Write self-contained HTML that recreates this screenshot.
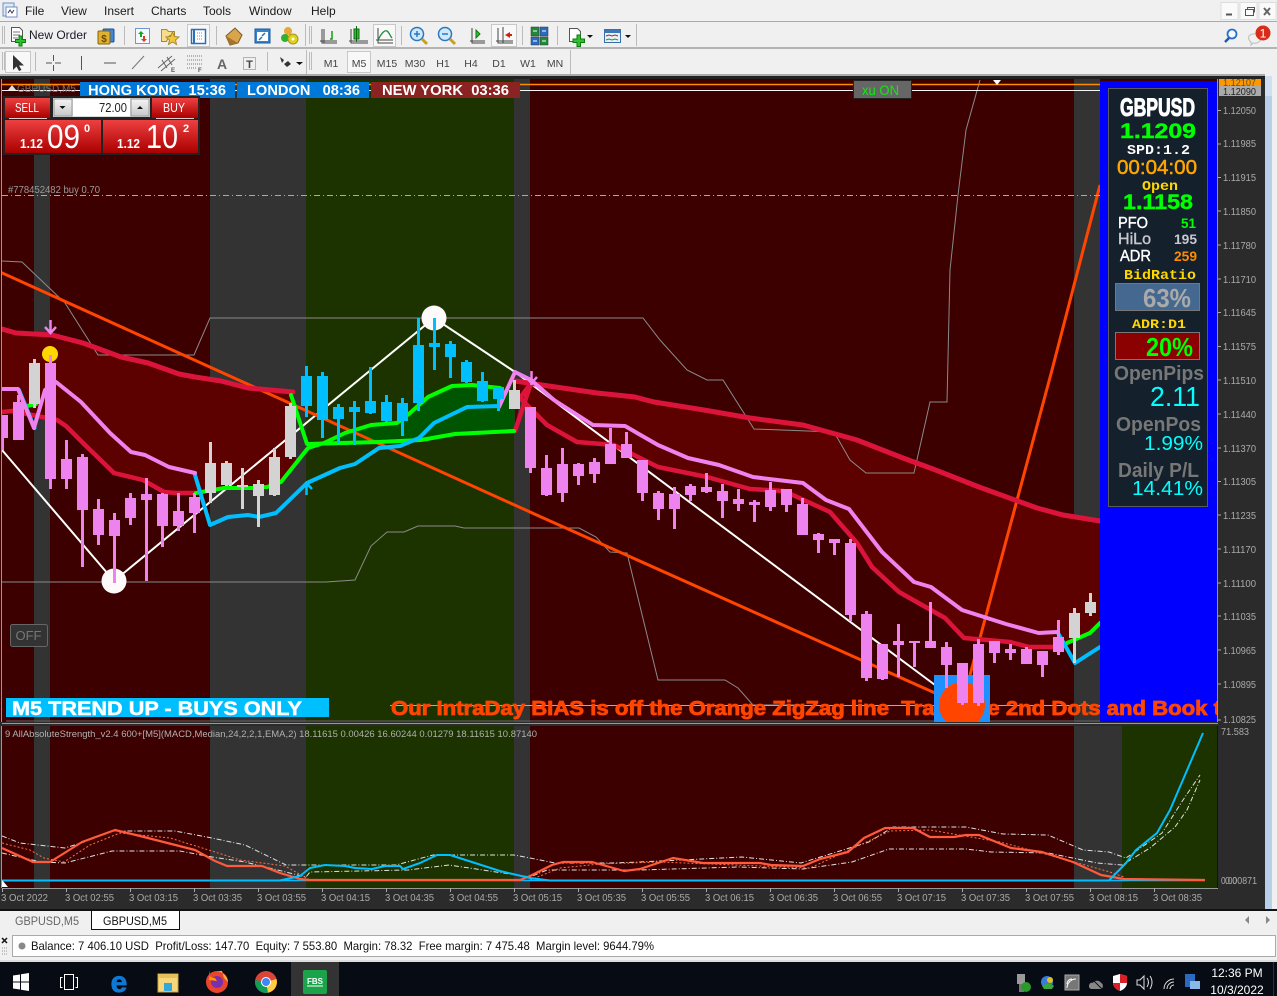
<!DOCTYPE html>
<html><head><meta charset="utf-8"><title>GBPUSD,M5</title>
<style>
html,body{margin:0;padding:0;background:#f0f0f0;width:1277px;height:996px;overflow:hidden}
svg{display:block;font-family:"Liberation Sans",sans-serif}
.m{font-size:12px;fill:#1a1a1a}
.tb{font-size:10.5px;fill:#444;text-anchor:middle}
.ax{font-size:10px;fill:#aaa}
.pm{font-family:"Liberation Mono",monospace;font-weight:bold}
.ps{font-weight:bold}
.ct{text-anchor:middle}
</style></head><body>
<svg width="1277" height="996" viewBox="0 0 1277 996" xmlns="http://www.w3.org/2000/svg">
<defs>
<clipPath id="main"><rect x="2" y="80" width="1215" height="642"/></clipPath>
<clipPath id="sub"><rect x="2" y="726" width="1216" height="162"/></clipPath>
<clipPath id="tk"><rect x="1100" y="690" width="117" height="32"/></clipPath>
<linearGradient id="rd" x1="0" y1="0" x2="0" y2="1"><stop offset="0" stop-color="#ee4040"/><stop offset="1" stop-color="#aa0000"/></linearGradient>
<linearGradient id="bt" x1="0" y1="0" x2="0" y2="1"><stop offset="0" stop-color="#f4f4f4"/><stop offset="1" stop-color="#c8c8c8"/></linearGradient>
</defs>

<!-- window chrome -->
<rect width="1277" height="996" fill="#f0f0f0"/>
<rect x="3" y="3" width="11" height="13" fill="#dfe8f5" stroke="#6f8fc0"/><rect x="6" y="7" width="11" height="10" fill="#fff" stroke="#6f8fc0"/><path d="M8 13l2-3 2 3 2-3" stroke="#336" fill="none"/>
<text class="m" x="25" y="15">File</text><text class="m" x="61" y="15">View</text><text class="m" x="104" y="15">Insert</text><text class="m" x="151" y="15">Charts</text><text class="m" x="203" y="15">Tools</text><text class="m" x="249" y="15">Window</text><text class="m" x="311" y="15">Help</text>
<g fill="#fafafa" stroke="#ddd"><rect x="1221" y="2.5" width="17" height="17"/><rect x="1240" y="2.5" width="17" height="17"/><rect x="1259" y="2.5" width="17" height="17"/></g>
<path d="M1226 14.5h6" stroke="#555" stroke-width="2"/>
<path d="M1245.5 9.5h8v6h-8zM1247.5 9.5v-2h7v5" fill="none" stroke="#555"/>
<path d="M1264 8l6 7M1270 8l-6 7" stroke="#666" stroke-width="2"/>
<rect y="21" width="1277" height="1" fill="#aaa"/>
<rect y="47" width="1277" height="2" fill="#b4b4b4"/>
<rect y="74" width="1265" height="2" fill="#aaa"/>
<g fill="#bbb"><rect x="2" y="26" width="1" height="18"/><rect x="4" y="26" width="1" height="18"/><rect x="2" y="52" width="1" height="18"/><rect x="4" y="52" width="1" height="18"/><rect x="309" y="26" width="1" height="18"/><rect x="311" y="26" width="1" height="18"/><rect x="309" y="52" width="1" height="18"/><rect x="311" y="52" width="1" height="18"/></g>
<g fill="#bbb"><rect x="305" y="24" width="1" height="22"/><rect x="124" y="26" width="1" height="19"/><rect x="216" y="26" width="1" height="19"/><rect x="401" y="26" width="1" height="19"/><rect x="522" y="26" width="1" height="19"/><rect x="557" y="26" width="1" height="19"/><rect x="636" y="24" width="1" height="22"/><rect x="35" y="52" width="1" height="19"/><rect x="267" y="52" width="1" height="19"/><rect x="306" y="50" width="1" height="24"/><rect x="570" y="50" width="1" height="24"/></g>

<!-- toolbar 1 -->
<path d="M11.5 27.5h8l3 3v11h-11z" fill="#fff" stroke="#555"/><path d="M13 32h7M13 35h7M13 38h5" stroke="#777"/><path d="M19 34h3v3.500h3.500v3H22v3.500h-3v-3.500h-3.500v-3H19z" fill="#2fc12f" stroke="#0c7a0c" transform="translate(0,2)"/>
<text x="29" y="39" font-size="12" fill="#1a1a2a">New Order</text>
<rect x="103" y="29" width="11" height="13" fill="#3d86d8" stroke="#1c4f90" rx="1"/><rect x="98" y="31" width="12" height="13" fill="#e0b030" stroke="#86640c" rx="1"/><text x="104" y="42" font-size="10" font-weight="bold" class="ct" fill="#6a4a00">$</text>
<rect x="135.500" y="28.500" width="14" height="15" fill="#f4f8ff" stroke="#6a9ad2"/><path d="M141 31l3 3h-2v3h-2v-3h-2z" fill="#1ba51b"/><path d="M144 42l-3-3h2v-3h2v3h2z" fill="#e03a1a"/>
<path d="M161.500 29.500h5l2 2h6v4h-5l-3 6h-5z" fill="#f7dc8a" stroke="#a88a30"/><path d="M172.500 32l2 4.500 4.500.5-3.500 3 1 4.500-4-2.500-4 2.500 1-4.500-3.500-3 4.500-.5z" fill="#f0c83c" stroke="#a88a30"/>
<rect x="187.500" y="24.500" width="22" height="22" fill="#f8f8f8" stroke="#c8c8c8"/><rect x="191.500" y="29.500" width="14" height="14" fill="#fff" stroke="#2a70b8" stroke-width="1.500"/><path d="M194 29v14" stroke="#2a70b8" stroke-width="2"/><path d="M197 33h6M197 36h6M197 39h6" stroke="#88a" stroke-dasharray="1 1"/>
<path d="M226 36l9-8 7 7-4 8-8 2z" fill="#d8a54c" stroke="#7c5a1c"/><path d="M226 36l4 9 8-2" fill="#a87428"/>
<rect x="255" y="29" width="15" height="14" fill="#3782c9" stroke="#1d5a98"/><rect x="257" y="32" width="11" height="9" fill="#fff"/><path d="M259 40l3-3M265 33l-3 3" stroke="#2a70b8" stroke-width="1.500"/>
<circle cx="288" cy="31" r="4" fill="#e8a838"/><circle cx="285" cy="38" r="4" fill="#30b030"/><circle cx="293" cy="39" r="5" fill="#e0d020" stroke="#a89810"/><circle cx="293" cy="39" r="1.500" fill="#fff"/>
<g fill="none" stroke="#444"><path d="M322 29v14h15M324 29v14M320 41h17"/></g><path d="M332 31v8h-2" stroke="#1b9a1b" fill="none" stroke-width="1.500"/>
<g fill="none" stroke="#444"><path d="M351 29v14h17M349 41h19"/></g><rect x="354" y="29" width="5" height="10" fill="#2fbf2f" stroke="#0c6a0c"/><path d="M356.500 26v16" stroke="#0c6a0c"/>
<rect x="373.500" y="24.500" width="22" height="22" fill="#f8f8f8" stroke="#c8c8c8"/><g fill="none" stroke="#444"><path d="M378 28v15h15M376 40h17"/></g><path d="M378 40c4-8 7-10 9-9 2 1 3 5 5 7" fill="none" stroke="#1b8a3a" stroke-width="1.300"/>
<circle cx="417" cy="34" r="6.500" fill="#cfe8fa" stroke="#2a78c0" stroke-width="1.500"/><path d="M414 34h6M417 31v6" stroke="#2a78c0" stroke-width="1.500"/><path d="M422 39l5 5" stroke="#c8a020" stroke-width="3"/>
<circle cx="445" cy="34" r="6.500" fill="#cfe8fa" stroke="#2a78c0" stroke-width="1.500"/><path d="M442 34h6" stroke="#2a78c0" stroke-width="1.500"/><path d="M450 39l5 5" stroke="#c8a020" stroke-width="3"/>
<g fill="none" stroke="#444"><path d="M472 28v15h13M470 41h15"/></g><path d="M476 30l4 4-4 4z" fill="#2fbf2f" stroke="#0c7a0c"/>
<rect x="491.500" y="24.500" width="25" height="22" fill="#f8f8f8" stroke="#c8c8c8"/><g fill="none" stroke="#444"><path d="M498 28v15h15M496 41h17M503 27v16"/></g><path d="M505 35l5-3v2h2v2h-2v2z" fill="#d02010"/>
<g stroke="#333" stroke-width=".5"><rect x="531" y="27" width="8" height="9" fill="#1e8a3a"/><rect x="540" y="27" width="8" height="9" fill="#2a6ac0"/><rect x="531" y="37" width="8" height="8" fill="#2a6ac0"/><rect x="540" y="37" width="8" height="8" fill="#1e8a3a"/></g><path d="M533 31h4M542 31h4M533 41h4M542 41h4" stroke="#fff"/>
<path d="M569.500 28.500h8l3 3v10h-11z" fill="#fff" stroke="#555"/><path d="M577 35h3.500v4h4v3.500h-4v4H577v-4h-4V39h4z" fill="#2fc12f" stroke="#0c7a0c"/><path d="M587 35h6l-3 3z" fill="#111"/>
<rect x="604.500" y="29.500" width="16" height="13" fill="#e8f0fa" stroke="#3a6ea8"/><rect x="605" y="30" width="15" height="3" fill="#3a78b8"/><path d="M606 36l3-1 3 1 3-1 3 1" stroke="#c02010" fill="none"/><path d="M606 40l3-1 3 1 3-1 3 1" stroke="#1b9a1b" fill="none"/><path d="M625 35h6l-3 3z" fill="#111"/>
<circle cx="1232" cy="34" r="4.500" fill="#f4f8ff" stroke="#2a70c8" stroke-width="1.800"/><path d="M1229 38l-4 4" stroke="#1d5aa8" stroke-width="2.500"/>
<path d="M1249 36c2-3 11-3 12 1s-4 7-8 6l-2 2 0-3c-2-1-3-4-2-6z" fill="#f0f0f0" stroke="#bbb"/><circle cx="1263" cy="33" r="7.500" fill="#d92a1a"/><text x="1263" y="37.500" font-size="12" class="ct" fill="#fff">1</text>

<!-- toolbar 2 -->
<rect x="5.500" y="51.500" width="25" height="21" fill="#f8f8f8" stroke="#c8c8c8"/><path d="M13 55v15l3.500-3.500 2.500 4.500 2.500-1-2.500-4.500h5z" fill="#333"/>
<path d="M46 63h6M55 63h6M53.500 55v6M53.500 65v6" stroke="#555"/>
<path d="M81.500 56v14" stroke="#555"/><path d="M104 63h12" stroke="#555"/><path d="M132 69l12-13" stroke="#777"/>
<path d="M158 68l14-12M161 71l14-12M162 60l5 8M167 57l5 8" stroke="#666" fill="none"/><text x="171" y="72" font-size="6" font-weight="bold" fill="#555">E</text>
<path d="M187 56h16M187 60h16M187 64h16M187 68h10" stroke="#777" stroke-dasharray="1 1"/><text x="198" y="72" font-size="6" font-weight="bold" fill="#555">F</text>
<text x="222" y="69" font-size="14" font-weight="bold" class="ct" fill="#666">A</text>
<rect x="243.500" y="57.500" width="12" height="12" fill="none" stroke="#777" stroke-dasharray="1 1"/><text x="249.500" y="68" font-size="11" font-weight="bold" class="ct" fill="#444">T</text>
<path d="M280 57l4 3-2 3zM284 64l3 3 4-3-3-3z" fill="#333"/><path d="M296 62h7l-3.500 3z" fill="#111"/>
<rect x="347.500" y="51.500" width="23" height="21" fill="#f8f8f8" stroke="#c8c8c8"/>
<text class="tb" x="331" y="67">M1</text><text class="tb" x="359" y="67">M5</text><text class="tb" x="387" y="67">M15</text><text class="tb" x="415" y="67">M30</text><text class="tb" x="443" y="67">H1</text><text class="tb" x="471" y="67">H4</text><text class="tb" x="499" y="67">D1</text><text class="tb" x="528" y="67">W1</text><text class="tb" x="555" y="67">MN</text>

<!-- chart frame -->
<rect x="0" y="76" width="1265" height="835" fill="#2b2b2b"/>
<rect x="0" y="76" width="1265" height="3" fill="#222"/>
<rect x="1265" y="76" width="7" height="835" fill="#b8d0ea"/>
<rect x="1265" y="76" width="7" height="20" fill="#d0e0f2"/>
<rect x="0" y="79" width="1218" height="644" fill="#3c0000"/>
<g fill="#333">
<rect x="34" y="79" width="16" height="644"/><rect x="210" y="79" width="96" height="644"/><rect x="514" y="79" width="16" height="644"/><rect x="1074" y="79" width="26" height="644"/>
</g>
<rect x="306" y="79" width="208" height="644" fill="#1c3300"/>

<g clip-path="url(#main)">
<path d="M2 329L16 333 52 335 83 343 121 357 148 363 179 374 195 377 221 381 248 388 293 392 296 463 281 482 267 487 253 488 224 488 196 493 176 493 164 492 143 480 114 473 83 443 66 426 57 420 12 411 2 412Z" fill="#5c0000"/>
<path d="M515 381L535 384 597 393 635 397 654 402 704 410 750 418 803 425 857 440 903 458 933 469 979 487 1037 508 1063 515 1100 521 1100 623 1090 633 1067 643 1056 647 1029 647 1010 642 964 638 945 618 899 592 872 567 857 543 830 512 784 491 750 489 707 477 658 467 614 445 577 442 547 425 520 398 515 431Z" fill="#5c0000"/>
<path d="M307 444L324 443 345 433 371 425 397 423 410 413 428 397 452 386 472 385 500 388 515 392 514 431 455 434 421 440 379 442Z" fill="#005500"/>
<!-- thin channels -->
<g fill="none" stroke="#8a8a8a" stroke-width="1">
<path d="M2 261L22 262 65 303 98 355 194 355 210 318 643 318 660 340 687 370 707 380 723 380 754 429 834 432 850 460 866 473 914 473 930 402 947 402 950 270 958 195 966 130 980 80"/>
<path d="M2 582L326 582 355 580 371 546 387 532 404 532 418 526 455 526 464 528 579 528 596 537 610 552 627 553 658 680 725 680 738 688 753 705 800 705"/>
</g>
<!-- zigzag -->
<path d="M2 450L114 581 434 318 515 372 935 685" fill="none" stroke="#fff" stroke-width="2"/>
<path d="M0 272L540 516.500 935 693" fill="none" stroke="#ff4500" stroke-width="3"/>
<path d="M970 675L1052 370 1100 185" fill="none" stroke="#ff4500" stroke-width="3"/>
<!-- top & level lines -->
<path d="M2 84.500H1100" stroke="#ff8c00" stroke-width="1.500"/>
<path d="M2 90.500H1100" stroke="#f5f5f5" stroke-width="1"/>
<path d="M2 195.500H1100" stroke="#aaa" stroke-dasharray="6 3 1 3"/>
<path d="M390 705.500H1100" stroke="#f0a040"/>
<path d="M6 721H1100" stroke="#666"/>
<!-- MA lines -->
<g fill="none" stroke-linejoin="round" stroke-linecap="round">
<path d="M2 329L16 333 52 335 83 343 121 357 148 363 179 374 195 377 221 381 248 388 293 392" stroke="#dc143c" stroke-width="5"/>
<path d="M515 381L535 384 597 393 635 397 654 402 704 410 750 418 803 425 857 440 903 458 933 469 979 487 1037 508 1063 515 1100 521" stroke="#dc143c" stroke-width="5"/>
<path d="M2 412L12 411 57 420 66 426 83 443 114 473 143 480 164 492 176 493 195 493" stroke="#dc143c" stroke-width="4.500"/>
<path d="M515 431L531 383 520 398 547 425 577 442 614 445 658 467 707 477 750 489 784 491 830 512 857 543 872 567 899 592 945 618 964 638 1010 642 1029 647 1056 647" stroke="#dc143c" stroke-width="4.500"/>
<path d="M196 493L224 488 253 488 267 487 281 482 308 448 324 443 345 433 371 425 397 423 410 413 428 397 452 386 472 385 500 388" stroke="#00ff00" stroke-width="4"/>
<path d="M291 395L307 444 379 442 421 440 455 434 514 431" stroke="#00ff00" stroke-width="4"/>
<path d="M27 406L36 404" stroke="#00ff00" stroke-width="4"/>
<path d="M1058 648L1067 643 1090 633 1100 623" stroke="#00ff00" stroke-width="4"/>
<path d="M19 390L34.500 428" stroke="#00bfff" stroke-width="4"/>
<path d="M195 475L210 525 228 517 248 515 259 517 276 513 307 483 340 468 355 464 379 448 400 446 419 438 434 423 467 407 499 406" stroke="#00bfff" stroke-width="4"/>
<path d="M1058 633L1075 663 1100 647" stroke="#00bfff" stroke-width="4"/>
<path d="M2 389L18 389 34 428 45 390 56 382 81 402 110 433 131 452 145 455 169 467 195 473" stroke="#ee82ee" stroke-width="4"/>
<path d="M499 407L515 372 531 380 554 400 593 425 625 426 658 445 688 458 719 465 753 477 803 483 826 500 849 509 882 552 914 582 931 587 962 610 1006 624 1038.600 633 1057 632" stroke="#ee82ee" stroke-width="4"/>
</g>
<!-- markers under candles -->
<circle cx="50" cy="354" r="8" fill="#ffd700"/>
<text x="391" y="715" font-size="20.500" font-weight="bold" fill="#ff4500" stroke="#ff4500" stroke-width=".8" textLength="830" lengthAdjust="spacingAndGlyphs" xml:space="preserve" style="white-space:pre">Our IntraDay BIAS is off the Orange ZigZag line  Trade the 2nd Dots and Book t</text>
<rect x="934" y="675" width="56" height="47" fill="#1e90ff"/>
<circle cx="962" cy="705" r="23" fill="#ff4500"/>
<circle cx="114" cy="581" r="12.500" fill="#fffafa"/>
<circle cx="434" cy="318" r="12.500" fill="#fffafa"/>
<!-- candles -->
<g fill="none" shape-rendering="crispEdges">
<path stroke="#ee82ee" stroke-width="3" d="M2.500 415V450M18.500 395V440M50.500 355V489M66.500 440V489M82.500 454V567M98.500 499V545M114.500 513V583M130.500 493V525M146.500 478V581M162.500 493V547M178.500 493V531M194.500 493V533M530.500 407V473M546.500 455V496M562.500 448V502M578.500 463V485M594.500 458V483M610.500 428V464M626.500 432V458M642.500 460V501M658.500 491V520M674.500 487V529M690.500 484V501M706.500 473V493M722.500 484V518M738.500 489V511M754.500 500V522M770.500 482V511M786.500 489V512M802.500 498V535M818.500 533V553M834.500 539V555M850.500 539V621M866.500 611V681M882.500 644V680M898.500 624V677M914.500 641V667M930.500 602V648M946.500 642V688M962.500 663V705M978.500 639V706M994.500 641V663M1010.500 644V660M1026.500 647V664M1042.500 651V677M1058.500 620V655"/>
<path stroke="#ee82ee" stroke-width="11" d="M2.500 415V438M18.500 402V440M50.500 363V479M66.500 459V479M82.500 457V510M98.500 509V535M114.500 520V536M130.500 498V518M146.500 494V500M162.500 494V526M178.500 511V526M194.500 497V513M530.500 407V468M546.500 468V495M562.500 464V493M578.500 464V476M594.500 462V474M610.500 444V464M626.500 444V458M642.500 460V493M658.500 493V509M674.500 494V509M690.500 486V495M706.500 487V492M722.500 491V501M738.500 499V504M754.500 502V505M770.500 490V507M786.500 489V505M802.500 504V535M818.500 534V540M834.500 539V543M850.500 543V615M866.500 614V678M882.500 644V679M898.500 641V645M914.500 641V643M930.500 641V648M946.500 647V665M962.500 663V703M978.500 644V703M994.500 641V653M1010.500 649V653M1026.500 649V664M1042.500 651V665M1058.500 637V652"/>
<path stroke="#d3d3d3" stroke-width="3" d="M34.500 359V408M210.500 442V503M226.500 461V486M242.500 468V509M258.500 480V527M274.500 448V496M290.500 403V459M514.500 380V409M1074.500 608V663M1090.500 593V616"/>
<path stroke="#d3d3d3" stroke-width="11" d="M34.500 363V404M210.500 463V493M226.500 463V485M242.500 485V487M258.500 484V496M274.500 457V495M290.500 406V457M514.500 390V409M1074.500 613V638M1090.500 602V613"/>
<path stroke="#00bfff" stroke-width="3" d="M306.500 366V417M322.500 372V438M338.500 404V443M354.500 401V445M370.500 367V414M386.500 395V422M402.500 398V436M418.500 318V411M434.500 318V370M450.500 341V378M466.500 360V383M482.500 372V402M498.500 387V411"/>
<path stroke="#00bfff" stroke-width="11" d="M306.500 376V406M322.500 376V420M338.500 407V419M354.500 407V412M370.500 401V413M386.500 402V421M402.500 403V421M418.500 345V403M434.500 343V347M450.500 344V357M466.500 362V382M482.500 381V401M498.500 387V399"/>
</g>
<!-- arrows -->
<g fill="none" stroke="#ee82ee" stroke-width="2.500"><path d="M50.500 320V333M45 327l5.500 6 5.500-6"/><path d="M531.500 371V385M526 377l5.500 6 5.500-6"/></g>
<g fill="none" stroke="#00bfff" stroke-width="2.500"><path d="M306.500 495V482M301 489l5.500-6 5.500 6"/></g>
<!-- blue panel -->
<rect x="1100" y="81" width="117" height="641" fill="#0000ff"/>
<rect x="1108.500" y="88.500" width="99" height="418" fill="#14202b" stroke="#5a5a5a"/>
<text x="1120" y="116" font-size="25" font-weight="bold" fill="#fff" stroke="#fff" stroke-width="1" textLength="75" lengthAdjust="spacingAndGlyphs">GBPUSD</text>
<text class="ps" x="1120" y="138" font-size="21" fill="#0f0" stroke="#0f0" stroke-width=".4" textLength="76" lengthAdjust="spacingAndGlyphs">1.1209</text>
<text class="pm" x="1127" y="154" font-size="14" fill="#fff" textLength="63" lengthAdjust="spacingAndGlyphs">SPD:1.2</text>
<text x="1117" y="174" font-size="20" fill="#ffa500" stroke="#ffa500" stroke-width=".5" textLength="80" lengthAdjust="spacingAndGlyphs">00:04:00</text>
<text class="pm" x="1142" y="190" font-size="14" fill="#ffd700" textLength="36" lengthAdjust="spacingAndGlyphs">Open</text>
<text class="ps" x="1123" y="209" font-size="21" fill="#0f0" stroke="#0f0" stroke-width=".4" textLength="70" lengthAdjust="spacingAndGlyphs">1.1158</text>
<text x="1118" y="228" font-size="16" fill="#fff" stroke="#fff" stroke-width=".4" textLength="30" lengthAdjust="spacingAndGlyphs">PFO</text>
<text class="ps" x="1181" y="228" font-size="14" fill="#0f0" textLength="15" lengthAdjust="spacingAndGlyphs">51</text>
<text x="1118" y="244" font-size="16" fill="#c8c8d0" stroke="#c8c8d0" stroke-width=".4" textLength="33" lengthAdjust="spacingAndGlyphs">HiLo</text>
<text class="ps" x="1174" y="244" font-size="14" fill="#c8c8d0" textLength="23" lengthAdjust="spacingAndGlyphs">195</text>
<text x="1120" y="261" font-size="16" fill="#fff" stroke="#fff" stroke-width=".4" textLength="31" lengthAdjust="spacingAndGlyphs">ADR</text>
<text class="ps" x="1174" y="261" font-size="14" fill="#ff8c00" textLength="23" lengthAdjust="spacingAndGlyphs">259</text>
<text class="pm" x="1124" y="279" font-size="14" fill="#ffd700" textLength="72" lengthAdjust="spacingAndGlyphs">BidRatio</text>
<rect x="1115.500" y="283.500" width="84" height="27" fill="#44688f" stroke="#777"/>
<text class="ps" x="1143" y="307" font-size="26" fill="#aaa" textLength="48" lengthAdjust="spacingAndGlyphs">63%</text>
<text class="pm" x="1132" y="328" font-size="13" fill="#ffd700" textLength="54" lengthAdjust="spacingAndGlyphs">ADR:D1</text>
<rect x="1115.500" y="332.500" width="84" height="27" fill="#8b0000" stroke="#777"/>
<text class="ps" x="1146" y="356" font-size="26" fill="#0f0" textLength="47" lengthAdjust="spacingAndGlyphs">20%</text>
<text class="ps" x="1114" y="380" font-size="20" fill="#777" textLength="90" lengthAdjust="spacingAndGlyphs">OpenPips</text>
<text x="1150" y="406" font-size="28" fill="#0ff" textLength="50" lengthAdjust="spacingAndGlyphs">2.11</text>
<text class="ps" x="1116" y="431" font-size="20" fill="#777" textLength="85" lengthAdjust="spacingAndGlyphs">OpenPos</text>
<text x="1144" y="450" font-size="20" fill="#0ff" textLength="59" lengthAdjust="spacingAndGlyphs">1.99%</text>
<text class="ps" x="1118" y="477" font-size="20" fill="#777" textLength="81" lengthAdjust="spacingAndGlyphs">Daily P/L</text>
<text x="1132" y="495" font-size="20" fill="#0ff" textLength="71" lengthAdjust="spacingAndGlyphs">14.41%</text>
<!-- ticker end over the panel -->
<g clip-path="url(#tk)"><text x="391" y="715" font-size="20.500" font-weight="bold" fill="#ff4500" stroke="#ff4500" stroke-width=".8" textLength="830" lengthAdjust="spacingAndGlyphs" xml:space="preserve" style="white-space:pre">Our IntraDay BIAS is off the Orange ZigZag line  Trade the 2nd Dots and Book t</text></g>
<rect x="6" y="698" width="323" height="19" fill="#00bfff"/>
<text x="12" y="715" font-size="19" font-weight="bold" fill="#fff" stroke="#fff" stroke-width=".4" textLength="290" lengthAdjust="spacingAndGlyphs">M5 TREND UP - BUYS ONLY</text>
</g>

<!-- chart overlay items -->
<path d="M8 90l4-5 4 5z" fill="#ddd"/>
<text x="17" y="92" font-size="10" fill="#777">GBPUSD,M5</text>
<rect x="80" y="82" width="155" height="16" fill="#0078d7"/><rect x="237" y="82" width="132" height="16" fill="#0078d7"/><rect x="371" y="82" width="149" height="16" fill="#8b2323"/>
<g font-weight="bold" fill="#fff" font-size="14.500">
<text x="88" y="95" textLength="138" lengthAdjust="spacingAndGlyphs" xml:space="preserve" style="white-space:pre">HONG KONG  15:36</text>
<text x="247" y="95" textLength="113" lengthAdjust="spacingAndGlyphs" xml:space="preserve" style="white-space:pre">LONDON   08:36</text>
<text x="382" y="95" textLength="127" lengthAdjust="spacingAndGlyphs" xml:space="preserve" style="white-space:pre">NEW YORK  03:36</text>
</g>
<path d="M993 80h8l-4 5z" fill="#fff"/>
<rect x="853.500" y="80.500" width="58" height="18" fill="#666" stroke="#222"/>
<text x="862" y="95" font-size="13.500" fill="#12e812" textLength="37" lengthAdjust="spacingAndGlyphs">xu ON</text>
<!-- one-click -->
<rect x="3" y="96" width="197" height="59" fill="#222"/>
<rect x="5" y="98" width="45" height="20" fill="url(#rd)"/><rect x="152" y="98" width="46" height="20" fill="url(#rd)"/>
<path d="M9 118.500h38M156 118.500h38" stroke="#fff" opacity=".8"/>
<text x="15" y="112" font-size="12.500" fill="#fff" textLength="24" lengthAdjust="spacingAndGlyphs">SELL</text><text x="163" y="112" font-size="12.500" fill="#fff" textLength="22" lengthAdjust="spacingAndGlyphs">BUY</text>
<rect x="53" y="98" width="97" height="19" fill="#ddd"/><rect x="54" y="99" width="18" height="17" fill="url(#bt)" stroke="#999"/><rect x="131" y="99" width="18" height="17" fill="url(#bt)" stroke="#999"/><rect x="73" y="99" width="57" height="17" fill="#fff"/>
<path d="M59.500 106h6l-3 3zM137 109h6l-3-3z" fill="#111"/>
<text x="99" y="112" font-size="12.500" fill="#222" textLength="28" lengthAdjust="spacingAndGlyphs">72.00</text>
<rect x="5" y="120" width="96" height="33" fill="url(#rd)"/><rect x="103" y="120" width="95" height="33" fill="url(#rd)"/>
<g fill="#fff">
<text x="20" y="148" font-size="13" font-weight="bold" textLength="23" lengthAdjust="spacingAndGlyphs">1.12</text><text x="47" y="148" font-size="33" textLength="33" lengthAdjust="spacingAndGlyphs">09</text><text x="84" y="132" font-size="11" font-weight="bold">0</text>
<text x="117" y="148" font-size="13" font-weight="bold" textLength="23" lengthAdjust="spacingAndGlyphs">1.12</text><text x="146" y="148" font-size="33" textLength="32" lengthAdjust="spacingAndGlyphs">10</text><text x="183" y="132" font-size="11" font-weight="bold">2</text>
</g>
<text x="8" y="193" font-size="10" fill="#999" textLength="92" lengthAdjust="spacingAndGlyphs">#778452482 buy 0.70</text>
<rect x="10.500" y="624.500" width="37" height="22" rx="2" fill="#333" stroke="#666"/><text x="28.500" y="640" font-size="13" class="ct" fill="#777">OFF</text>

<!-- price axis -->
<g class="ax">
<path d="M1218 110.500h3M1218 144h3M1218 177.500h3M1218 211h3M1218 245h3M1218 279h3M1218 312.500h3M1218 346.500h3M1218 380h3M1218 414h3M1218 448h3M1218 481.500h3M1218 515h3M1218 549h3M1218 583h3M1218 616h3M1218 650h3M1218 684h3M1218 720h3" stroke="#aaa"/>
<g font-size="10" fill="#aaa">
<text x="1223" y="114" textLength="33" lengthAdjust="spacingAndGlyphs">1.12050</text><text x="1223" y="147" textLength="33" lengthAdjust="spacingAndGlyphs">1.11985</text><text x="1223" y="181" textLength="33" lengthAdjust="spacingAndGlyphs">1.11915</text><text x="1223" y="215" textLength="33" lengthAdjust="spacingAndGlyphs">1.11850</text><text x="1223" y="249" textLength="33" lengthAdjust="spacingAndGlyphs">1.11780</text><text x="1223" y="283" textLength="33" lengthAdjust="spacingAndGlyphs">1.11710</text><text x="1223" y="316" textLength="33" lengthAdjust="spacingAndGlyphs">1.11645</text><text x="1223" y="350" textLength="33" lengthAdjust="spacingAndGlyphs">1.11575</text><text x="1223" y="384" textLength="33" lengthAdjust="spacingAndGlyphs">1.11510</text><text x="1223" y="418" textLength="33" lengthAdjust="spacingAndGlyphs">1.11440</text><text x="1223" y="452" textLength="33" lengthAdjust="spacingAndGlyphs">1.11370</text><text x="1223" y="485" textLength="33" lengthAdjust="spacingAndGlyphs">1.11305</text><text x="1223" y="519" textLength="33" lengthAdjust="spacingAndGlyphs">1.11235</text><text x="1223" y="553" textLength="33" lengthAdjust="spacingAndGlyphs">1.11170</text><text x="1223" y="587" textLength="33" lengthAdjust="spacingAndGlyphs">1.11100</text><text x="1223" y="620" textLength="33" lengthAdjust="spacingAndGlyphs">1.11035</text><text x="1223" y="654" textLength="33" lengthAdjust="spacingAndGlyphs">1.10965</text><text x="1223" y="688" textLength="33" lengthAdjust="spacingAndGlyphs">1.10895</text><text x="1223" y="723" textLength="33" lengthAdjust="spacingAndGlyphs">1.10825</text>
</g></g>
<rect x="1219" y="79" width="42" height="8" fill="#ff9800"/>
<text x="1223" y="86" font-size="10" fill="#552" textLength="33" lengthAdjust="spacingAndGlyphs">1.12107</text>
<rect x="1219" y="86" width="42" height="10" fill="#aaa"/>
<text x="1223" y="95" font-size="10" fill="#222" textLength="33" lengthAdjust="spacingAndGlyphs">1.12090</text>
<path d="M1.500 79V888M1217.500 79V888" stroke="#999"/>

<!-- sub window -->
<rect x="0" y="722" width="1218" height="4" fill="#2b2b2b"/><rect x="2" y="723" width="1216" height="1" fill="#999"/>
<rect x="2" y="726" width="1216" height="162" fill="#3c0000"/>
<g fill="#333"><rect x="34" y="726" width="16" height="162"/><rect x="210" y="726" width="96" height="162"/><rect x="514" y="726" width="16" height="162"/><rect x="1074" y="726" width="48" height="162"/></g>
<rect x="306" y="726" width="208" height="162" fill="#1c3300"/><rect x="1122" y="726" width="95" height="162" fill="#1c3300"/>
<text x="5" y="737" font-size="9" fill="#b0b0b0" textLength="532" lengthAdjust="spacingAndGlyphs">9 AllAbsoluteStrength_v2.4 600+[M5](MACD,Median,24,2,2,1,EMA,2) 18.11615 0.00426 16.60244 0.01279 18.11615 10.87140</text>
<g clip-path="url(#sub)" fill="none" stroke-linejoin="round">
<path d="M2 836L20 843 65 848 84 842 112 831 175 831 212 838 245 845 286 865 396 865 433 855 514 855 530 858 555 863 612 863 640 862 742 857 801 863 869 842 893 827 966 827 1003 834 1048 835 1083 850 1109 852 1126 858 1162 833 1183 800 1200 775" stroke="#e0e0e0" stroke-dasharray="5 2 1 2"/>
<path d="M2 853L41 862 65 863 112 851 180 851 212 857 245 862 306 877 310 872 408 870 449 865 530 877 547 870 640 870 738 867 803 869 852 862 889 849 966 849 991 852 1048 853 1097 863 1122 865 1150 848 1175 827 1187 810 1200 780" stroke="#e0e0e0" stroke-dasharray="5 2 1 2"/>
<path d="M2 843L30 850 44 858 64 862 90 845 120 833 170 838 215 852 240 860 285 866 310 880" stroke="#ff7040" stroke-dasharray="2 2"/>
<path d="M530 880L560 868 600 864 660 862 760 866 810 868 860 845 890 831 930 830 1000 842 1060 858 1110 872 1124 877" stroke="#ff7040" stroke-dasharray="2 2"/>
<path d="M2 880.500H1205" stroke="#00bfff" stroke-width="1.500"/>
<path d="M2 848L33 862 50 862 82 842 115 830 140 836 195 850 215 861 227 866 262 866 280 873 300 879 310 880 520 880 530 876 552 865 563 862 592 862 624 871 640 869 673 858 703 863 760 863 771 865 803 866 820 859 848 852 864 838 885 828 913 828 930 837 954 837 966 835 979 835 1011 848 1042 852 1073 862 1101 875 1124 879 1205 880" stroke="#ff5a3c" stroke-width="2.200"/>
<path d="M2 880.500H280L300 876 310 868 325 865 345 866 355 868 372 869 385 866 400 866 403 869 420 863 437 855 450 855 500 871 530 878 550 880.500H1109L1126 863 1136 850 1157 833 1170 810 1185 775 1203 733" stroke="#00bfff" stroke-width="2"/>
</g>
<path d="M2 880l6 7H2z" fill="#fff"/>
<path d="M2 888.500H1218" stroke="#999"/>
<text x="1221" y="735" font-size="10" fill="#aaa" textLength="28" lengthAdjust="spacingAndGlyphs">71.583</text>
<text x="1225" y="884" font-size="10" fill="#aaa" textLength="32" lengthAdjust="spacingAndGlyphs">0.00871</text><text x="1221" y="884" font-size="10" fill="#aaa" textLength="16" lengthAdjust="spacingAndGlyphs">0.00</text>
<path d="M2.500 888v4M66.500 888v4M130.500 888v4M194.500 888v4M258.500 888v4M322.500 888v4M386.500 888v4M450.500 888v4M514.500 888v4M578.500 888v4M642.500 888v4M706.500 888v4M770.500 888v4M834.500 888v4M898.500 888v4M962.500 888v4M1026.500 888v4M1090.500 888v4M1154.500 888v4" stroke="#aaa"/>
<g font-size="10" fill="#aaa">
<text x="1" y="901" textLength="47" lengthAdjust="spacingAndGlyphs">3 Oct 2022</text><text x="65" y="901" textLength="49" lengthAdjust="spacingAndGlyphs">3 Oct 02:55</text><text x="129" y="901" textLength="49" lengthAdjust="spacingAndGlyphs">3 Oct 03:15</text><text x="193" y="901" textLength="49" lengthAdjust="spacingAndGlyphs">3 Oct 03:35</text><text x="257" y="901" textLength="49" lengthAdjust="spacingAndGlyphs">3 Oct 03:55</text><text x="321" y="901" textLength="49" lengthAdjust="spacingAndGlyphs">3 Oct 04:15</text><text x="385" y="901" textLength="49" lengthAdjust="spacingAndGlyphs">3 Oct 04:35</text><text x="449" y="901" textLength="49" lengthAdjust="spacingAndGlyphs">3 Oct 04:55</text><text x="513" y="901" textLength="49" lengthAdjust="spacingAndGlyphs">3 Oct 05:15</text><text x="577" y="901" textLength="49" lengthAdjust="spacingAndGlyphs">3 Oct 05:35</text><text x="641" y="901" textLength="49" lengthAdjust="spacingAndGlyphs">3 Oct 05:55</text><text x="705" y="901" textLength="49" lengthAdjust="spacingAndGlyphs">3 Oct 06:15</text><text x="769" y="901" textLength="49" lengthAdjust="spacingAndGlyphs">3 Oct 06:35</text><text x="833" y="901" textLength="49" lengthAdjust="spacingAndGlyphs">3 Oct 06:55</text><text x="897" y="901" textLength="49" lengthAdjust="spacingAndGlyphs">3 Oct 07:15</text><text x="961" y="901" textLength="49" lengthAdjust="spacingAndGlyphs">3 Oct 07:35</text><text x="1025" y="901" textLength="49" lengthAdjust="spacingAndGlyphs">3 Oct 07:55</text><text x="1089" y="901" textLength="49" lengthAdjust="spacingAndGlyphs">3 Oct 08:15</text><text x="1153" y="901" textLength="49" lengthAdjust="spacingAndGlyphs">3 Oct 08:35</text>
</g>

<!-- tabs -->
<rect x="0" y="909" width="1277" height="2" fill="#111"/>
<rect x="0" y="911" width="1277" height="21" fill="#f0f0f0"/>
<path d="M91.500 911v18.500h88V911" fill="#fff" stroke="#111"/>
<text x="15" y="925" font-size="12" fill="#666" textLength="64" lengthAdjust="spacingAndGlyphs">GBPUSD,M5</text>
<text x="103" y="925" font-size="12" fill="#111" textLength="64" lengthAdjust="spacingAndGlyphs">GBPUSD,M5</text>
<path d="M1249 916v8l-4-4zM1266 916v8l4-4z" fill="#888"/>
<!-- status -->
<rect x="0" y="932" width="1277" height="29" fill="#f0f0f0"/>
<rect x="12.500" y="935.500" width="1263" height="21" fill="#fff" stroke="#aaa"/>
<path d="M2 938l5 5M7 938l-5 5" stroke="#111" stroke-width="1.500"/>
<path d="M2 948h6M2 951h6M2 954h6" stroke="#999" stroke-dasharray="1 1"/>
<circle cx="22" cy="946" r="3.500" fill="#888"/>
<text x="31" y="950" font-size="12" fill="#111" textLength="623" lengthAdjust="spacingAndGlyphs" xml:space="preserve" style="white-space:pre">Balance: 7 406.10 USD  Profit/Loss: 147.70  Equity: 7 553.80  Margin: 78.32  Free margin: 7 475.48  Margin level: 9644.79%</text>

<!-- taskbar -->
<rect x="0" y="960" width="1277" height="2" fill="#ddd"/>
<rect x="0" y="962" width="1277" height="34" fill="#070c14"/>
<g fill="#fff"><path d="M13 975.500l7-1v7h-7zM21 974.300l8-1.300v8.500h-8zM13 982.500h7v7l-7-1zM21 982.500h8V991l-8-1.300z"/></g>
<path d="M62.500 977.500h-2v10h2M75.500 977.500h2v10h-2" fill="none" stroke="#fff"/><rect x="64.500" y="974.500" width="9" height="15" fill="none" stroke="#fff"/>
<text x="119" y="992" font-size="30" font-weight="bold" class="ct" fill="#0f78d4" stroke="#0f78d4" stroke-width=".8">e</text>
<rect x="158" y="974" width="20" height="18" fill="#f6d77c" stroke="#c8a040"/><rect x="158" y="974" width="20" height="4" fill="#e8c055"/><rect x="164" y="983" width="8" height="8" fill="#32a8d8"/>
<circle cx="217" cy="982" r="11" fill="#e8452c"/><path d="M217 971c6 1 11 6 11 11l-4-4-2-7z" fill="#ffb02e"/><circle cx="217" cy="982" r="6" fill="#7a2fb0"/><path d="M210 971c-2 4 0 7 5 7l2 3-8-1z" fill="#ff9500"/>
<circle cx="266" cy="982" r="11" fill="#db4437"/><path d="M266 982l-9.500 5.500A11 11 0 0 0 266 993a11 11 0 0 0 2-0.200z" fill="#0f9d58"/><path d="M266 982l10.500-3A11 11 0 0 1 268 992.800z" fill="#ffcd40"/><path d="M266 982l-9.500 5.500A11 11 0 0 1 255.200 980z" fill="#0f9d58"/><circle cx="266" cy="982" r="5" fill="#fff"/><circle cx="266" cy="982" r="4" fill="#4285f4"/>
<rect x="291" y="962" width="48" height="34" fill="#333"/>
<rect x="303" y="970" width="24" height="24" rx="2" fill="#1aa34a"/>
<text x="315" y="984" font-size="8" font-weight="bold" class="ct" fill="#fff">FBS</text><path d="M307 986h16" stroke="#fff"/>
<rect x="1017" y="974" width="8" height="10" fill="#999"/><rect x="1019" y="984" width="5" height="8" fill="#777"/><circle cx="1026" cy="987" r="5" fill="#2a9a2a"/>
<circle cx="1047" cy="982" r="6" fill="#3a7ad8"/><path d="M1042 986c4-3 9-3 12 0l-2 3h-8z" fill="#3ca83c"/><circle cx="1050" cy="980" r="3" fill="#e0c020"/>
<rect x="1065" y="975" width="14" height="15" fill="#777" stroke="#aaa"/><path d="M1067 988a9 9 0 0 1 9-9M1067 984a5 5 0 0 1 5-5" stroke="#fff" fill="none"/>
<path d="M1089 986c0-3 3-4 4-3 1-3 7-3 8 0 2 0 3 5 0 6h-10c-2-1-2-2-2-3z" fill="#888"/><path d="M1090 977l12 12" stroke="#111"/>
<path d="M1113 976l7-2 7 2v7c0 4-4 7-7 8-3-1-7-4-7-8z" fill="#fff"/><path d="M1120 974l7 2v7h-7zM1113 983h7v8c-3-1-7-4-7-8z" fill="#d8202a"/>
<path d="M1137 980h3l4-4v13l-4-4h-3z" fill="none" stroke="#ddd"/><path d="M1147 978q3 4 0 9M1150 976q4 6 0 13" stroke="#ddd" fill="none"/>
<path d="M1164 989a10 10 0 0 1 10-10M1167 989a7 7 0 0 1 7-7M1170 989a4 4 0 0 1 4-4" stroke="#ddd" fill="none"/>
<rect x="1185" y="974" width="10" height="13" fill="#2a6ac0"/><rect x="1190" y="981" width="10" height="8" fill="#8ab8e8"/>
<text x="1237" y="977" font-size="12" class="ct" fill="#fff">12:36 PM</text>
<text x="1237" y="994" font-size="12" class="ct" fill="#fff">10/3/2022</text>
<rect x="1273" y="962" width="1" height="34" fill="#333"/>
</svg>
</body></html>
